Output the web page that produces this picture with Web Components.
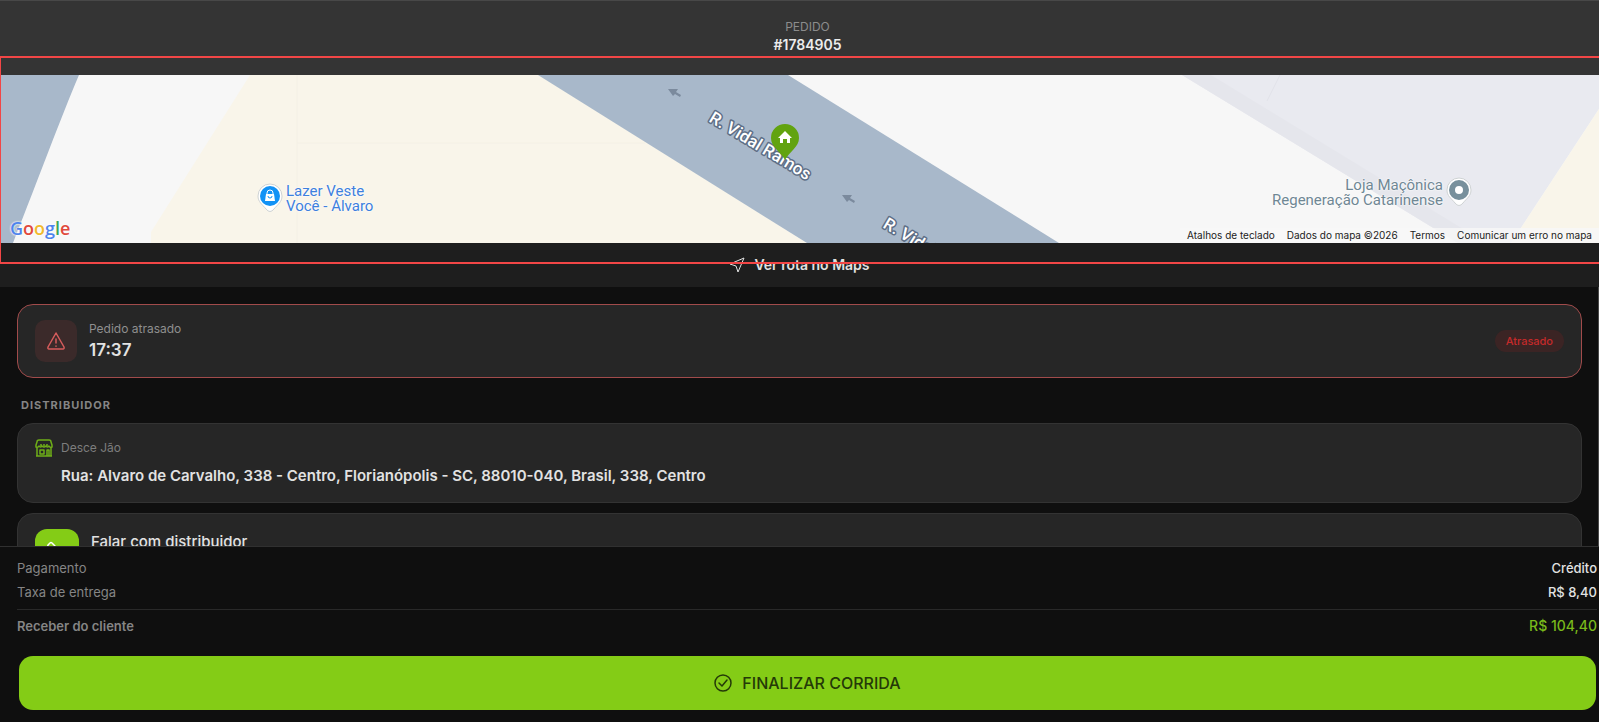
<!DOCTYPE html>
<html lang="pt-BR">
<head>
<meta charset="UTF-8">
<meta name="viewport" content="width=device-width, initial-scale=1">
<title>Pedido #1784905</title>
<style>
    body {
        margin: 0;
        background: #0f0f0f;
        color: #e2e2e2;
        font-family: Inter, "Liberation Sans", sans-serif;
    }
</style>
</head>
<body>
<pedido-pagina>
    <pedido-cabecalho slot="topo" numero="#1784905">Pedido</pedido-cabecalho>
    <mapa-entrega slot="topo"></mapa-entrega>
    <rota-link slot="topo">Ver rota no Maps</rota-link>

    <prazo-tarjeta hora="17:37" estado="Atrasado">Pedido atrasado</prazo-tarjeta>
    <secao-titulo>Distribuidor</secao-titulo>
    <endereco-tarjeta nome="Desce Jão">Rua: Alvaro de Carvalho, 338 - Centro, Florianópolis - SC, 88010-040, Brasil, 338, Centro</endereco-tarjeta>
    <contato-tarjeta>Falar com distribuidor</contato-tarjeta>

    <pagamento-rodape slot="rodape">
        <valor-linha rotulo="Pagamento">Crédito</valor-linha>
        <valor-linha rotulo="Taxa de entrega">R$ 8,40</valor-linha>
        <valor-linha rotulo="Receber do cliente" total>R$ 104,40</valor-linha>
        <span slot="acao">FINALIZAR CORRIDA</span>
    </pagamento-rodape>
</pedido-pagina>

<script>
// Registra um elemento cujo conteúdo vem de uma plantilla em texto
function definir(nome, html) {
    const plantilla = document.createElement("template");
    plantilla.innerHTML = html;
    customElements.define(nome, class extends HTMLElement {
        constructor() {
            super();
            this.attachShadow({mode: "open"});
            this.shadowRoot.appendChild(plantilla.content.cloneNode(true));
            // Cada atributo preenche o nó com o mesmo data-attr
            this.shadowRoot.querySelectorAll("[data-attr]").forEach(no => {
                no.textContent = this.getAttribute(no.dataset.attr);
            });
        }
    });
}

definir("pedido-pagina", `
    <style>
        :host {
            display: flex;
            flex-direction: column;
            height: 100vh;
            overflow: hidden;
        }
        .topo {
            position: relative;
            flex: none;
        }
        /* Moldura de destaque sobre a área do mapa */
        .destaque {
            position: absolute;
            top: 56px;
            right: 0;
            bottom: 23px;
            left: 0;
            border: 2px solid #f24646;
            border-left-width: 1px;
            border-right-width: 0;
            pointer-events: none;
            box-sizing: border-box;
        }
        main {
            flex: 1;
            min-height: 0;
            overflow: hidden;
            padding: 17px 16px 0 17px;
            border-right: 1px solid #4a4a4a;
        }
    </style>
    <div class="topo">
        <slot name="topo"></slot>
        <div class="destaque"></div>
    </div>
    <main><slot></slot></main>
    <slot name="rodape"></slot>
`);

definir("pedido-cabecalho", `
    <style>
        :host {
            display: block;
            padding: 17px 0 21px 16px;
            border-top: 1px solid #484848;
            background: #343434;
            text-align: center;
        }
        p, h1 {
            margin: 0;
            line-height: 18px;
        }
        p {
            color: #8c8c8c;
            font-size: 12px;
            text-transform: uppercase;
        }
        h1 {
            color: #ececec;
            font-size: 14px;
            font-weight: 600;
        }
    </style>
    <p><slot></slot></p>
    <h1 data-attr="numero"></h1>
`);

definir("mapa-entrega", `
    <style>
        :host {
            display: block;
            position: relative;
            height: 168px;
            overflow: hidden;
            background: #f7f7f7;
            font-family: Roboto, sans-serif;
        }
        .ruas {
            display: block;
            width: 100%;
            height: 100%;
        }
        .rua {
            fill: #fff;
            stroke: #5d6e86;
            stroke-width: 3px;
            stroke-linejoin: round;
            paint-order: stroke;
            font-size: 17px;
            font-weight: 500;
        }
        mapa-local {
            position: absolute;
        }
        #loja {
            top: 108px;
            left: 256px;
        }
        #macom {
            top: 102px;
            right: 126px;
        }
        .google {
            position: absolute;
            bottom: 3px;
            left: 10px;
            font: 600 18px/24px "Open Sans", sans-serif;
            text-shadow: 0 0 2px #fff, 0 0 2px #fff;
        }
        .legal {
            display: flex;
            position: absolute;
            right: 0;
            bottom: 0;
            gap: 12px;
            padding: 0 7px;
            background: rgba(247, 247, 247, 0.8);
            font-family: Inter, sans-serif;
            line-height: 15px;
        }
        .legal a {
            color: #222;
            font-size: 10px;
            text-decoration: none;
        }
    </style>
    <svg class="ruas" viewBox="0 0 1599 168" preserveAspectRatio="xMidYMid slice">
        <path fill="#f7f7f7" d="M0 0H1599V168H0z"/>
        <path fill="#a8b8ca" d="M0 0H79C61 42 40 100 13 168H0z"/>
        <path fill="#f9f5ea" d="M250 0H539L807 168H151V157z"/>
        <path fill="none" stroke="#f4f0e5" d="M297 0V168M297 68H645"/>
        <path fill="#a8b8ca" d="M538 0H788L1059 168H807z"/>
        <path fill="#e9eaf0" d="M1182 0H1599V34L1511 168H1458z"/>
        <path fill="#e5e6ec" d="M1182 0H1211L1486 168H1458z"/>
        <path fill="none" stroke="#e1e2e9" d="M1280 0L1267 26"/>
        <path fill="#f9f5ea" d="M1599 34V168H1511z"/>
        <g fill="#7b8a9d">
            <path d="M668 14L678 14L676 17L681 20L680 22L675 19L673 21z"/>
            <path d="M842 120L852 120L850 123L855 126L854 128L849 125L847 127z"/>
        </g>
        <text class="rua" transform="translate(708 46) rotate(31)">R. Vidal Ramos</text>
        <text class="rua" transform="translate(882 152) rotate(31)">R. Vidal Ramos</text>
        <path fill="#62a30f" d="M785 49a14 14 0 0 1 14 14c0 9-9 13-14 22c-5-9-14-13-14-22a14 14 0 0 1 14-14z"/>
        <path fill="#fff" d="M785 56L792 63H790V68H787V64H783V68H780V63H778z"/>
    </svg>
    <mapa-local id="loja">
        <svg slot="antes" width="28" height="32" viewBox="0 0 28 32">
            <path fill="#fff" stroke="#cfd3d4" d="M14 1a12 12 0 0 1 12 12c0 6-4 8-8 13q-4 5-8 0c-4-5-8-7-8-13a12 12 0 0 1 12-12z"/>
            <circle cx="14" cy="13" r="10" fill="#1292f5"/>
            <path fill="#fff" d="M10 11H18L19 18H9z"/>
            <path fill="none" stroke="#fff" d="M11 12V10a3 3 0 0 1 6 0V12"/>
            <path fill="none" stroke="#1292f5" d="M12 13a2 2 0 0 0 4 0"/>
        </svg>
        Lazer Veste<br>Você - Álvaro
    </mapa-local>
    <mapa-local id="macom">
        Loja Maçônica<br>Regeneração Catarinense
        <svg slot="depois" width="28" height="32" viewBox="0 0 28 32">
            <path fill="#fff" stroke="#cfd3d4" d="M14 1a12 12 0 0 1 12 12c0 6-4 8-8 13q-4 5-8 0c-4-5-8-7-8-13a12 12 0 0 1 12-12z"/>
            <circle cx="14" cy="13" r="7" fill="none" stroke="#78909c" stroke-width="6"/>
        </svg>
    </mapa-local>
    <div class="google"><span style="color:#4f84ec">G</span><span style="color:#e0493c">o</span><span style="color:#f0b92d">o</span><span style="color:#4f84ec">g</span><span style="color:#3da557">l</span><span style="color:#e0493c">e</span></div>
    <div class="legal">
        <a href="#">Atalhos de teclado</a>
        <a href="#">Dados do mapa ©2026</a>
        <a href="#">Termos</a>
        <a href="#">Comunicar um erro no mapa</a>
    </div>
`);

definir("mapa-local", `
    <style>
        :host {
            display: flex;
            align-items: center;
            gap: 2px;
            color: #3d80de;
            font-size: 15px;
            line-height: 15px;
            text-shadow: 0 0 2px #fff, 0 0 2px #fff;
        }
        :host(#macom) {
            color: #6f8794;
            text-align: right;
        }
    </style>
    <slot name="antes"></slot>
    <div><slot></slot></div>
    <slot name="depois"></slot>
`);

definir("rota-link", `
    <style>
        :host {
            display: block;
            background: #1e1e1e;
        }
        a {
            display: flex;
            justify-content: center;
            align-items: center;
            gap: 9px;
            padding: 10px 0;
            color: #e2e2e2;
            font-size: 14px;
            font-weight: 600;
            line-height: 24px;
            text-decoration: none;
        }
    </style>
    <a href="#">
        <svg width="16" height="16" viewBox="0 0 16 16" fill="none" stroke="currentColor" stroke-linejoin="round"><path d="M1 7L15 1L9 15L7 9z"/></svg>
        <slot></slot>
    </a>
`);

definir("prazo-tarjeta", `
    <style>
        :host {
            display: flex;
            align-items: center;
            gap: 12px;
            padding: 15px 17px;
            border: 1px solid #a14b4b;
            border-radius: 16px;
            background: #262626;
        }
        .icone {
            display: grid;
            place-items: center;
            width: 42px;
            height: 42px;
            border-radius: 10px;
            background: #3b2a2a;
        }
        .texto {
            flex: 1;
        }
        p {
            margin: 0;
            color: #8f8f8f;
            font-size: 12px;
            line-height: 18px;
        }
        strong {
            display: block;
            font-size: 17px;
            font-weight: 600;
            line-height: 24px;
        }
        .estado {
            padding: 0 11px;
            border-radius: 11px;
            background: #3b2424;
            color: #c52a2a;
            font-size: 11px;
            font-weight: 500;
            line-height: 22px;
        }
    </style>
    <div class="icone">
        <svg width="20" height="20" viewBox="0 0 20 20" fill="none" stroke="#d65c5c" stroke-width="1.5" stroke-linejoin="round" stroke-linecap="round"><path d="M10 2L18 16Q18.500 18 17 18H3Q1.500 18 2 16zM10 8V12M10 15V15.200"/></svg>
    </div>
    <div class="texto">
        <p><slot></slot></p>
        <strong data-attr="hora"></strong>
    </div>
    <span class="estado" data-attr="estado"></span>
`);

definir("secao-titulo", `
    <style>
        :host {
            display: block;
            padding: 17px 4px 8px;
        }
        h2 {
            margin: 0;
            color: #858585;
            font-size: 11px;
            font-weight: 700;
            letter-spacing: 1px;
            line-height: 20px;
            text-transform: uppercase;
        }
    </style>
    <h2><slot></slot></h2>
`);

definir("endereco-tarjeta", `
    <style>
        :host {
            display: grid;
            grid-template-columns: 18px 1fr;
            align-items: center;
            gap: 4px 8px;
            padding: 12px 17px 14px;
            border: 1px solid #333;
            border-radius: 16px;
            background: #262626;
        }
        p, strong {
            margin: 0;
            line-height: 24px;
        }
        p {
            color: #7d7d7d;
            font-size: 12px;
        }
        strong {
            grid-column: 2;
            font-size: 15px;
            font-weight: 600;
        }
    </style>
    <svg width="18" height="18" viewBox="0 0 18 18" fill="none" stroke="#6fae18" stroke-width="1.5" stroke-linejoin="round"><path d="M4 1H14Q16 1 16 3L17 6V8Q15 9 14 7Q12 9 11 7Q9 9 7 7Q6 9 4 7Q3 9 1 8V6L2 3Q2 1 4 1zM2 9V17M16 9V17M1 17H17M5 11H9V15H5zM12 17V11H14V17M6 5V7M9 5V7M12 5V7"/></svg>
    <p data-attr="nome"></p>
    <strong><slot></slot></strong>
`);

definir("contato-tarjeta", `
    <style>
        :host {
            display: block;
            margin-top: 10px;
        }
        button {
            display: flex;
            align-items: flex-start;
            gap: 12px;
            width: 100%;
            padding: 15px 17px;
            border: 1px solid #333;
            border-radius: 16px;
            background: #262626;
            color: #e2e2e2;
            font: 500 15px/26px Inter, sans-serif;
            text-align: left;
        }
        .icone {
            display: grid;
            place-items: center;
            width: 44px;
            height: 44px;
            border-radius: 12px;
            background: #84cc16;
        }
    </style>
    <button type="button">
        <span class="icone"><svg width="20" height="20" viewBox="0 0 20 20" fill="none" stroke="#fff" stroke-width="1.500" stroke-linejoin="round"><path d="M1 4L3 2Q4 1 5 2L8 5Q8 6 6 8Q8 12 12 14Q14 12 15 12L18 15Q19 16 18 17L16 19Q8 19 3 12Q0 8 1 4z"/></svg></span>
        <slot></slot>
    </button>
`);

definir("valor-linha", `
    <style>
        :host {
            display: flex;
            justify-content: space-between;
            color: #e2e2e2;
            font-size: 13px;
            font-weight: 500;
            line-height: 24px;
        }
        .rotulo {
            color: #858585;
            font-weight: 400;
        }
        :host([total]) {
            margin-top: 5px;
            padding-top: 4px;
            border-top: 1px solid #292929;
            color: #79b91b;
            font-size: 14px;
        }
        :host([total]) .rotulo {
            font-size: 13px;
            font-weight: 600;
        }
    </style>
    <span class="rotulo" data-attr="rotulo"></span>
    <span><slot></slot></span>
`);

definir("pagamento-rodape", `
    <style>
        :host {
            display: block;
            position: relative;
            flex: none;
            padding: 9px 2px 12px 17px;
            border-top: 1px solid #303030;
            background: #0f0f0f;
        }
        button {
            display: flex;
            justify-content: center;
            align-items: center;
            gap: 10px;
            width: calc(100% - 3px);
            height: 54px;
            margin: 18px 1px 0 2px;
            border: 0;
            border-radius: 14px;
            background: #84cc16;
            color: #243a08;
            font: 500 16px/24px Inter, sans-serif;
        }
    </style>
    <slot></slot>
    <button type="button">
        <svg width="18" height="18" viewBox="0 0 18 18" fill="none" stroke="currentColor" stroke-width="1.500" stroke-linecap="round" stroke-linejoin="round"><circle cx="9" cy="9" r="8"/><path d="M5 9L8 12L13 6"/></svg>
        <slot name="acao"></slot>
    </button>
`);
</script>
</body>
</html>
